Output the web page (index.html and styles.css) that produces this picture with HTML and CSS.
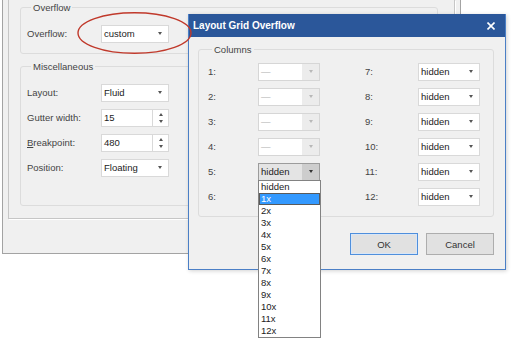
FILE: index.html
```html
<!DOCTYPE html>
<html lang="en">
<head>
    <meta charset="UTF-8">
    <meta name="viewport" content="width=device-width, initial-scale=1.0">
    <title>Layout Grid Overflow</title>
    <link rel="stylesheet" href="styles.css">
</head>
<body>
    <div class="win">
        <div class="panel">
            <div class="group group-overflow">
                <span class="group-title">Overflow</span>
                <div class="rows">
                    <div class="row">
                        <label>Overflow:</label>
                        <div class="combo"><span class="val">custom</span><span class="drop"><i class="arrow"></i></span></div>
                    </div>
                </div>
            </div>
            <div class="group group-misc">
                <span class="group-title">Miscellaneous</span>
                <div class="rows">
                    <div class="row">
                        <label>Layout:</label>
                        <div class="combo"><span class="val">Fluid</span><span class="drop"><i class="arrow"></i></span></div>
                    </div>
                    <div class="row">
                        <label>Gutter width:</label>
                        <div class="spin"><span class="val">15</span><span class="spin-btns"><i class="up"></i><i class="arrow"></i></span></div>
                    </div>
                    <div class="row">
                        <label><u>B</u>reakpoint:</label>
                        <div class="spin"><span class="val">480</span><span class="spin-btns"><i class="up"></i><i class="arrow"></i></span></div>
                    </div>
                    <div class="row">
                        <label>Position:</label>
                        <div class="combo"><span class="val">Floating</span><span class="drop"><i class="arrow"></i></span></div>
                    </div>
                </div>
            </div>
        </div>
    </div>

    <div class="dialog">
        <div class="titlebar">
            <span>Layout Grid Overflow</span>
            <svg class="close" width="8" height="8" viewBox="0 0 8 8"><path d="M0.5 0.5L7.5 7.5M7.5 0.5L0.5 7.5" stroke="#fff" stroke-width="1.6"/></svg>
        </div>
        <div class="dialog-body">
            <div class="group cols">
                <span class="group-title">Columns</span>
                <div class="cols-grid">
                    <div class="col col-left">
                        <div class="row"><label>1:</label><div class="combo off"><span class="val">—</span><span class="drop"><i class="arrow"></i></span></div></div>
                        <div class="row"><label>2:</label><div class="combo off"><span class="val">—</span><span class="drop"><i class="arrow"></i></span></div></div>
                        <div class="row"><label>3:</label><div class="combo off"><span class="val">—</span><span class="drop"><i class="arrow"></i></span></div></div>
                        <div class="row"><label>4:</label><div class="combo off"><span class="val">—</span><span class="drop"><i class="arrow"></i></span></div></div>
                        <div class="row">
                            <label>5:</label>
                            <div class="combo open">
                                <span class="val">hidden</span><span class="drop"><i class="arrow"></i></span>
                                <ul class="list">
                                    <li>hidden</li>
                                    <li class="sel">1x</li>
                                    <li>2x</li>
                                    <li>3x</li>
                                    <li>4x</li>
                                    <li>5x</li>
                                    <li>6x</li>
                                    <li>7x</li>
                                    <li>8x</li>
                                    <li>9x</li>
                                    <li>10x</li>
                                    <li>11x</li>
                                    <li>12x</li>
                                </ul>
                            </div>
                        </div>
                        <!-- covered by the open list -->
                        <div class="row"><label>6:</label><div class="combo"><span class="val"></span><span class="drop"><i class="arrow"></i></span></div></div>
                    </div>
                    <div class="col col-right">
                        <div class="row"><label>7:</label><div class="combo"><span class="val">hidden</span><span class="drop"><i class="arrow"></i></span></div></div>
                        <div class="row"><label>8:</label><div class="combo"><span class="val">hidden</span><span class="drop"><i class="arrow"></i></span></div></div>
                        <div class="row"><label>9:</label><div class="combo"><span class="val">hidden</span><span class="drop"><i class="arrow"></i></span></div></div>
                        <div class="row"><label>10:</label><div class="combo"><span class="val">hidden</span><span class="drop"><i class="arrow"></i></span></div></div>
                        <div class="row"><label>11:</label><div class="combo"><span class="val">hidden</span><span class="drop"><i class="arrow"></i></span></div></div>
                        <div class="row"><label>12:</label><div class="combo"><span class="val">hidden</span><span class="drop"><i class="arrow"></i></span></div></div>
                    </div>
                </div>
            </div>
            <div class="buttons">
                <button class="btn btn-default">OK</button>
                <button class="btn">Cancel</button>
            </div>
        </div>
    </div>

    <!-- annotation circled around the overflow combo -->
    <svg class="mark" width="118" height="46" viewBox="0 0 118 46">
        <ellipse cx="58.5" cy="22" rx="56.5" ry="20.3" fill="none" stroke="#c0392b" stroke-width="1.4"/>
    </svg>
</body>
</html>
```

FILE: styles.css
```css
* {
    margin: 0;
    padding: 0;
    box-sizing: border-box;
}

body {
    background: #fff;
    font-family: "Liberation Sans", Arial, sans-serif;
    font-size: 9.5px;
    color: #444;
}

ul {
    list-style: none;
}

/* window behind the dialog */
.win {
    width: 459px;
    margin-left: 2px;
    background: #f0f0f0;
    border: 1px solid #a3a3a3;
    border-top: 0;
    padding: 0 5px 34px;
}

.panel {
    border: 1px solid #c6c6c6;
    border-top: 0;
    box-shadow: 1px 1px 0 #fff;
    padding: 7px 16px 12px 11px;
}

.group {
    border: 1px solid #dcdcdc;
    border-radius: 3px;
    padding: 0 6px;
}

.group-title {
    display: block;
    width: max-content;
    height: 13px;
    line-height: 13px;
    margin: -7px 0 0 4px;
    padding: 0 2px;
    background: #f0f0f0;
}

.group-overflow .rows {
    padding: 7px 0;
}

.group-misc {
    margin-top: 12px;
}

.group-misc .rows {
    padding: 7px 0 25px;
}

.row {
    display: flex;
    align-items: center;
    height: 25px;
}

.row label {
    width: 74px;
}

/* combo boxes */
.combo, .spin {
    display: flex;
    width: 68px;
    height: 18px;
    border: 1px solid #d9d9d9;
    background: #fff;
    color: #222;
}

.combo .val, .spin .val {
    flex: 1;
    line-height: 16px;
    padding-left: 2px;
}

.combo .drop {
    width: 17px;
    display: flex;
    align-items: center;
    justify-content: center;
}

.arrow, .up {
    display: block;
    width: 0;
    height: 0;
    border-left: 2.5px solid transparent;
    border-right: 2.5px solid transparent;
    border-top: 3px solid #555;
}

.up {
    border-top: 0;
    border-bottom: 3px solid #555;
}

.spin .val {
    border-right: 1px solid #d9d9d9;
}

.spin-btns {
    width: 15px;
    display: flex;
    flex-direction: column;
    align-items: center;
    justify-content: center;
    gap: 4px;
}

/* dialog */
.dialog {
    position: absolute;
    left: 188px;
    top: 14px;
    width: 318px;
    height: 256px;
    background: #f0f0f0;
    border: 1px solid #4b7fc6;
    border-top: 0;
    box-shadow: 1px 1px 4px rgba(0, 0, 0, 0.18);
}

.titlebar {
    height: 23px;
    background: #2b579a;
    color: #fff;
    font-size: 10px;
    font-weight: bold;
    display: flex;
    align-items: center;
    justify-content: space-between;
    padding: 0 10px 0 4px;
}

.dialog-body {
    padding: 12px 11px 0 9px;
}

.cols {
    padding: 0 0 0 9px;
}

.cols-grid {
    display: flex;
    gap: 45px;
    padding: 3px 0 7px;
}

.cols .row label {
    width: 50px;
}

.cols .col-right .row label {
    width: 53px;
}

.cols .combo {
    width: 62px;
}

.combo.off {
    border-color: #d6d6d6;
    color: #b0b0b0;
}

.combo.off .drop {
    background: #ececec;
}

.combo.off .arrow {
    border-top-color: #b8b8b8;
}

.combo.open {
    position: relative;
    border-color: #9c9c9c;
    background: #e4e4e4;
}

.combo.open .drop {
    background: #cdcdcd;
}

.combo.open .arrow {
    border-top-color: #333;
}

.list {
    position: absolute;
    top: 100%;
    left: -1px;
    width: 63px;
    background: #fff;
    border: 1px solid #828282;
    color: #222;
}

.list li {
    height: 12px;
    line-height: 12px;
    padding-left: 2px;
}

.list li.sel {
    background: #3399ff;
    color: #fff;
    outline: 1px solid #5a5a5a;
    outline-offset: -1px;
}

.buttons {
    display: flex;
    justify-content: flex-end;
    gap: 8px;
    margin-top: 16px;
}

.btn {
    width: 68px;
    height: 22px;
    background: #e1e1e1;
    border: 1px solid #adadad;
    font-family: inherit;
    font-size: 9.5px;
    color: #333;
}

.btn-default {
    border-color: #4f8fdc;
    box-shadow: inset 0 0 0 1px #d8e6f7;
}

.mark {
    position: absolute;
    left: 76px;
    top: 11px;
}
```
